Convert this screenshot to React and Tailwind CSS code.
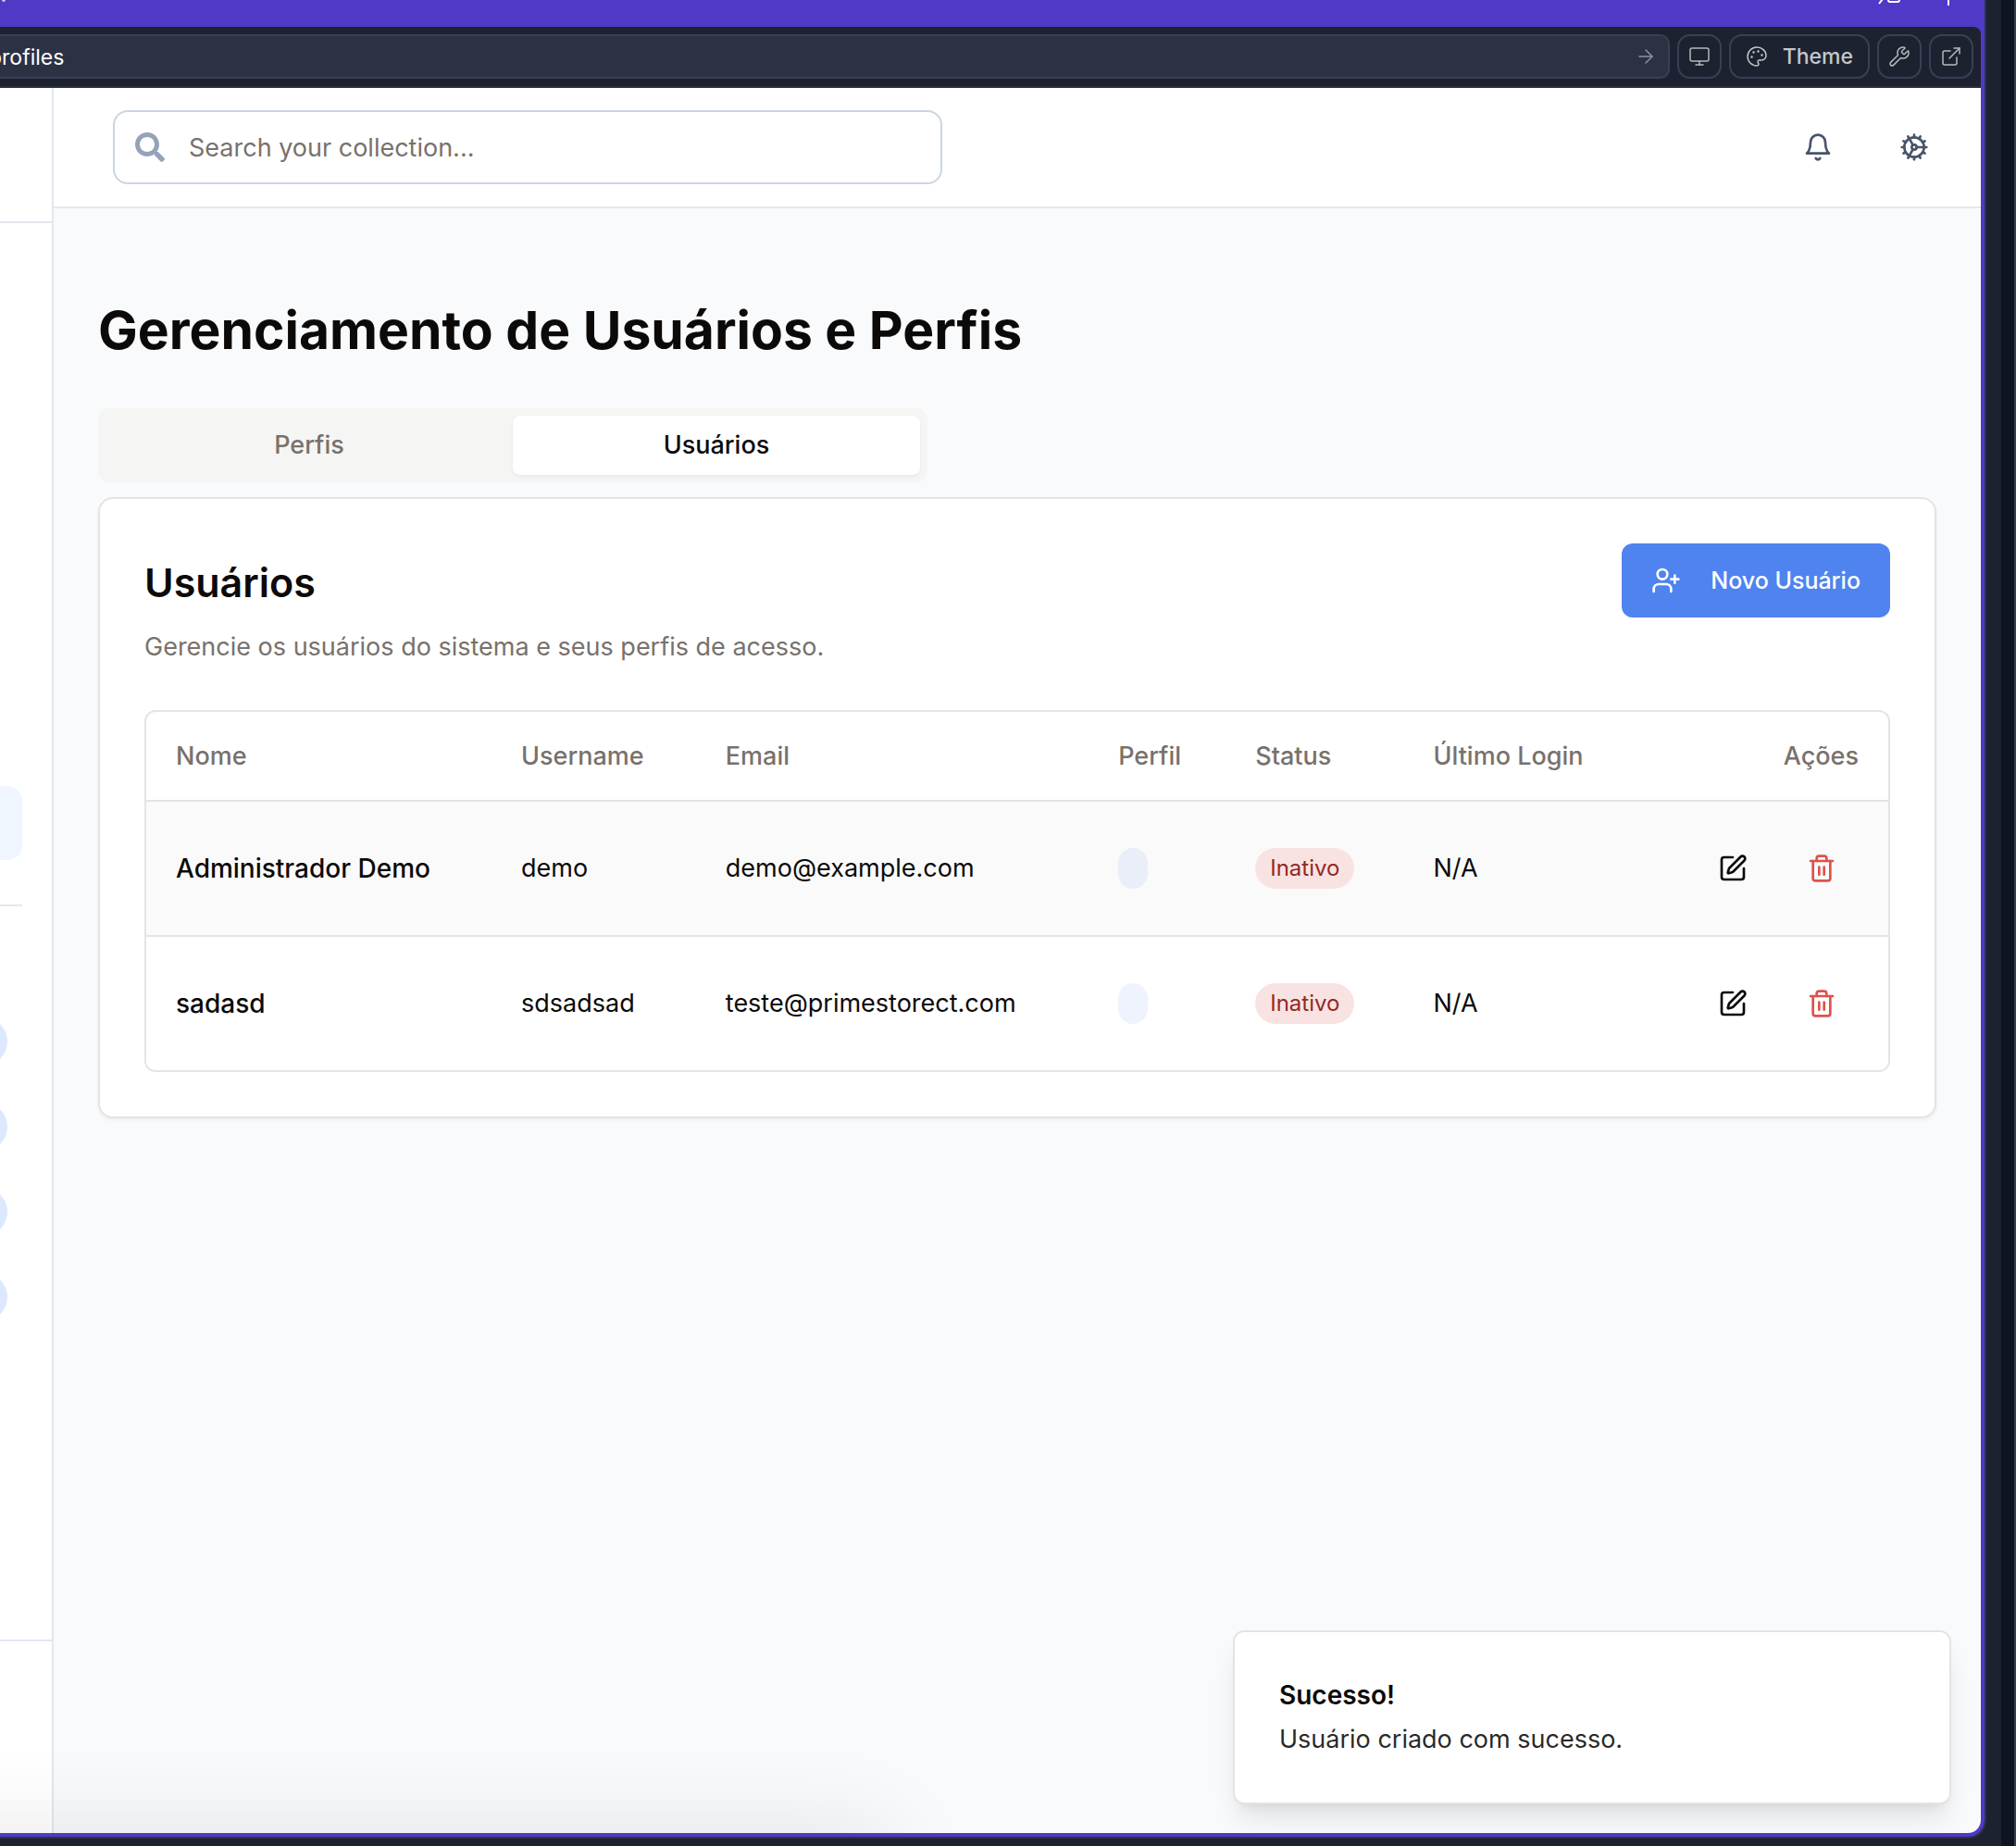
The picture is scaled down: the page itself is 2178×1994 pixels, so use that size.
import { Trash2, SquarePen, UserPlus, Monitor, Palette, Wrench, ExternalLink, ArrowRight, Cog } from "lucide-react";
import { FaSearch } from "react-icons/fa";

const users = [
  { name: "Administrador Demo", username: "demo", email: "demo@example.com", status: "Inativo", lastLogin: "N/A", active: true },
  { name: "sadasd", username: "sdsadsad", email: "teste@primestorect.com", status: "Inativo", lastLogin: "N/A", active: false },
];

function ToolButton({ label, children }) {
  return (
    <button type="button" aria-label={label} className="flex size-12 shrink-0 items-center justify-center rounded-[14px] border-2 border-[#3b3f56] text-[#b4b9ba]">
      {children}
    </button>
  );
}

function BellIcon() {
  return (
    <svg viewBox="0 0 24 24" className="size-8" fill="none" stroke="currentColor" strokeWidth="2" strokeLinecap="round" strokeLinejoin="round" aria-hidden="true">
      <path d="M6 8a6 6 0 0 1 12 0c0 7 3 9 3 9H3s3-2 3-9" />
      <path d="M10.3 21a1.94 1.94 0 0 0 3.4 0" />
    </svg>
  );
}

function TitleBar() {
  return (
    <div className="flex h-[29px] shrink-0 items-start justify-between overflow-hidden bg-[#4f39c6] pr-[35px] text-white">
      <svg viewBox="0 0 8 4" className="h-1 w-2" aria-hidden="true">
        <circle cx="4" cy="0" r="2" fill="#c9c9d2" />
      </svg>
      <svg viewBox="0 0 80 8" className="h-2 w-20" fill="none" stroke="currentColor" aria-hidden="true">
        <path d="M1 4 L5 -1" strokeWidth="2" />
        <path d="M11 -1 V0 Q11 2 13 2 H21 Q23 2 23 0 V-1" strokeWidth="2" />
        <path d="M76 -1 V6" strokeWidth="2" />
      </svg>
    </div>
  );
}

function BrowserBar() {
  return (
    <div className="flex h-[66px] shrink-0 items-center gap-2 border-b-2 border-[#2c2e42] bg-[#1d2231] pr-2">
      <div className="flex h-12 min-w-0 flex-1 items-center overflow-hidden rounded-r-[10px] border-y-2 border-r-2 border-[#3b3f56] bg-[#2d3144] pr-3">
        <input type="text" aria-label="Address" defaultValue="profiles" className="-ml-3 h-11 min-w-0 flex-1 bg-transparent pt-0.5 text-[23px] text-white outline-none" />
        <ArrowRight className="size-6 shrink-0 text-[#8f9399]" strokeWidth={1.5} />
      </div>
      <ToolButton label="Device"><Monitor className="size-6" strokeWidth={1.5} /></ToolButton>
      <button type="button" className="flex h-12 shrink-0 items-center gap-4 rounded-[14px] border-2 border-[#3b3f56] px-4 text-[23px] font-medium text-[#c3c7cb]">
        <Palette className="size-6" strokeWidth={1.5} />
        Theme
      </button>
      <ToolButton label="Tools"><Wrench className="size-6" strokeWidth={1.5} /></ToolButton>
      <ToolButton label="Open in new tab"><ExternalLink className="size-6" strokeWidth={1.5} /></ToolButton>
    </div>
  );
}

function Sidebar() {
  return (
    <aside className="flex w-[58px] shrink-0 flex-col border-r-2 border-[#e2e8f0] bg-white">
      <div className="h-[146px] border-b-2 border-[#e2e8f0]" />
      <nav className="flex flex-1 flex-col">
        <div className="mt-[608px] mr-8 h-20 rounded-r-2xl bg-[#eff6ff]" />
        <div className="mt-12 mr-8 h-0.5 bg-[#e2e8f0]" />
        <div className="mt-[120px] flex flex-col gap-10">
          {[1, 2, 3, 4].map((n) => (
            <span key={n} className="h-13 w-2 overflow-hidden">
              <span className="-ml-14 block h-13 w-16 rounded-full bg-[#dbe8fe]" />
            </span>
          ))}
        </div>
      </nav>
      <div className="h-[209px] border-t-2 border-[#e2e8f0]" />
    </aside>
  );
}

function UsersTable() {
  return (
    <div className="overflow-hidden rounded-xl border-2 border-[#e4e4e4]">
      <table className="w-full border-separate border-spacing-0 text-left text-[27px] leading-10">
        <colgroup>
          <col className="w-[373px]" />
        </colgroup>
        <thead className="text-[#78716c]">
          <tr>
            {["Nome", "Username", "Email", "Perfil", "Status", "Último Login"].map((h) => (
              <th key={h} scope="col" className="h-[97px] border-b-2 border-[#e4e4e4] px-8 font-medium whitespace-nowrap">{h}</th>
            ))}
            <th scope="col" className="h-[97px] border-b-2 border-[#e4e4e4] px-8 text-right font-medium">Ações</th>
          </tr>
        </thead>
        <tbody className="text-[#0c0a09] [&>tr:not(:last-child)>td]:border-b-2 [&_td]:border-[#e4e4e4] [&_td]:px-8 [&_td]:py-8">
          {users.map((u) => (
            <tr key={u.username} className={u.active ? "bg-[#fafafa]" : "bg-white"}>
              <td className="text-[28px] font-medium">{u.name}</td>
              <td>{u.username}</td>
              <td>{u.email}</td>
              <td><span className="block h-11 w-8 rounded-full bg-[#2563eb]/8" /></td>
              <td>
                <span className="inline-block rounded-full bg-[#f8e3e2] px-4 py-1.5 align-middle text-2xl leading-8 text-[#942825]">{u.status}</span>
              </td>
              <td>{u.lastLogin}</td>
              <td>
                <div className="flex justify-end gap-4">
                  <button type="button" aria-label={"Editar " + u.name} className="flex size-20 items-center justify-center">
                    <SquarePen className="size-8" />
                  </button>
                  <button type="button" aria-label={"Excluir " + u.name} className="flex size-20 items-center justify-center text-[#de524c]">
                    <Trash2 className="size-8" />
                  </button>
                </div>
              </td>
            </tr>
          ))}
        </tbody>
      </table>
    </div>
  );
}

function Toast() {
  return (
    <div role="status" className="absolute right-8 bottom-[31px] w-[776px] rounded-xl border-2 border-[#e4e4e4] bg-white p-12 shadow-[0_20px_30px_-6px_rgba(0,0,0,0.1),0_8px_12px_-8px_rgba(0,0,0,0.1)]">
      <p className="text-[28px] leading-10 font-semibold text-[#0c0a09]">Sucesso!</p>
      <p className="mt-2 text-[27px] leading-10 text-[#0c0a09]/90">Usuário criado com sucesso.</p>
    </div>
  );
}

export default function App() {
  return (
    <div className="flex h-screen overflow-hidden bg-[#1c2230] font-['Inter',sans-serif]">
      <div className="mb-2 flex min-w-0 flex-1 flex-col overflow-hidden rounded-br-[20px] border-r-2 border-b-2 border-[#2e3344]">
        <div className="flex min-h-0 flex-1 flex-col bg-[#4f39c6]">
          <TitleBar />
          <div className="mr-1 mb-1 flex min-h-0 flex-1 flex-col overflow-hidden rounded-tr-lg rounded-br-[14px]">
            <BrowserBar />
            <div className="relative flex min-h-0 flex-1 overflow-hidden bg-[#f9fafc]">
              <Sidebar />
              <div className="flex min-w-0 flex-1 flex-col">
                <header className="flex h-[130px] shrink-0 items-center justify-between border-b-2 border-[#e2e8f0] bg-white pr-[56px] pl-16">
                  <div className="flex h-20 w-[896px] items-center gap-[26px] rounded-2xl border-2 border-[#cbd5e1] px-[22px]">
                    <FaSearch className="size-8 shrink-0 text-[#94a3b8]" />
                    <input type="search" aria-label="Search your collection" placeholder="Search your collection..." className="min-w-0 flex-1 bg-transparent pt-0.5 text-[27px] leading-10 outline-none placeholder:text-[#78716c]" />
                  </div>
                  <div className="flex gap-[72px] text-[#475569]">
                    <button type="button" aria-label="Notifications"><BellIcon /></button>
                    <button type="button" aria-label="Settings"><Cog className="size-8" /></button>
                  </div>
                </header>
                <main className="px-12 pt-24">
                  <h1 className="text-[57px] leading-[72px] font-bold text-[#0c0a09]">Gerenciamento de Usuários e Perfis</h1>
                  <div role="tablist" className="mt-12 grid h-20 w-[896px] grid-cols-2 rounded-xl bg-[#f5f5f4] p-2 text-[27px] leading-10 font-medium">
                    <button type="button" role="tab" aria-selected="false" className="rounded-lg text-[#78716c]">Perfis</button>
                    <button type="button" role="tab" aria-selected="true" className="rounded-lg bg-white text-[#0c0a09] shadow-[0_2px_4px_rgba(0,0,0,0.05)]">Usuários</button>
                  </div>
                  <section className="mt-4 rounded-2xl border-2 border-[#e4e4e4] bg-white p-12 shadow-[0_2px_4px_rgba(0,0,0,0.05)]">
                    <div className="mb-12 flex items-start justify-between">
                      <div className="pt-4">
                        <h2 className="text-[43px] leading-[52px] font-semibold text-[#0c0a09]">Usuários</h2>
                        <p className="mt-6 text-[27px] leading-10 text-[#78716c]">Gerencie os usuários do sistema e seus perfis de acesso.</p>
                      </div>
                      <button type="button" className="flex h-20 items-center gap-8 rounded-xl bg-[#4f83ef] px-8 text-[25px] leading-10 font-medium text-white">
                        <UserPlus className="size-8" />
                        Novo Usuário
                      </button>
                    </div>
                    <UsersTable />
                  </section>
                </main>
              </div>
              <div className="pointer-events-none absolute -bottom-10 -left-20 h-px w-[1000px] shadow-[0_0_100px_40px_rgba(0,0,0,0.1)]" />
              <Toast />
            </div>
          </div>
        </div>
      </div>
      <div className="w-4 shrink-0" />
      <div className="w-4 shrink-0 border-r-2 border-[#3c3c46] bg-[#0d1423]" />
    </div>
  );
}
